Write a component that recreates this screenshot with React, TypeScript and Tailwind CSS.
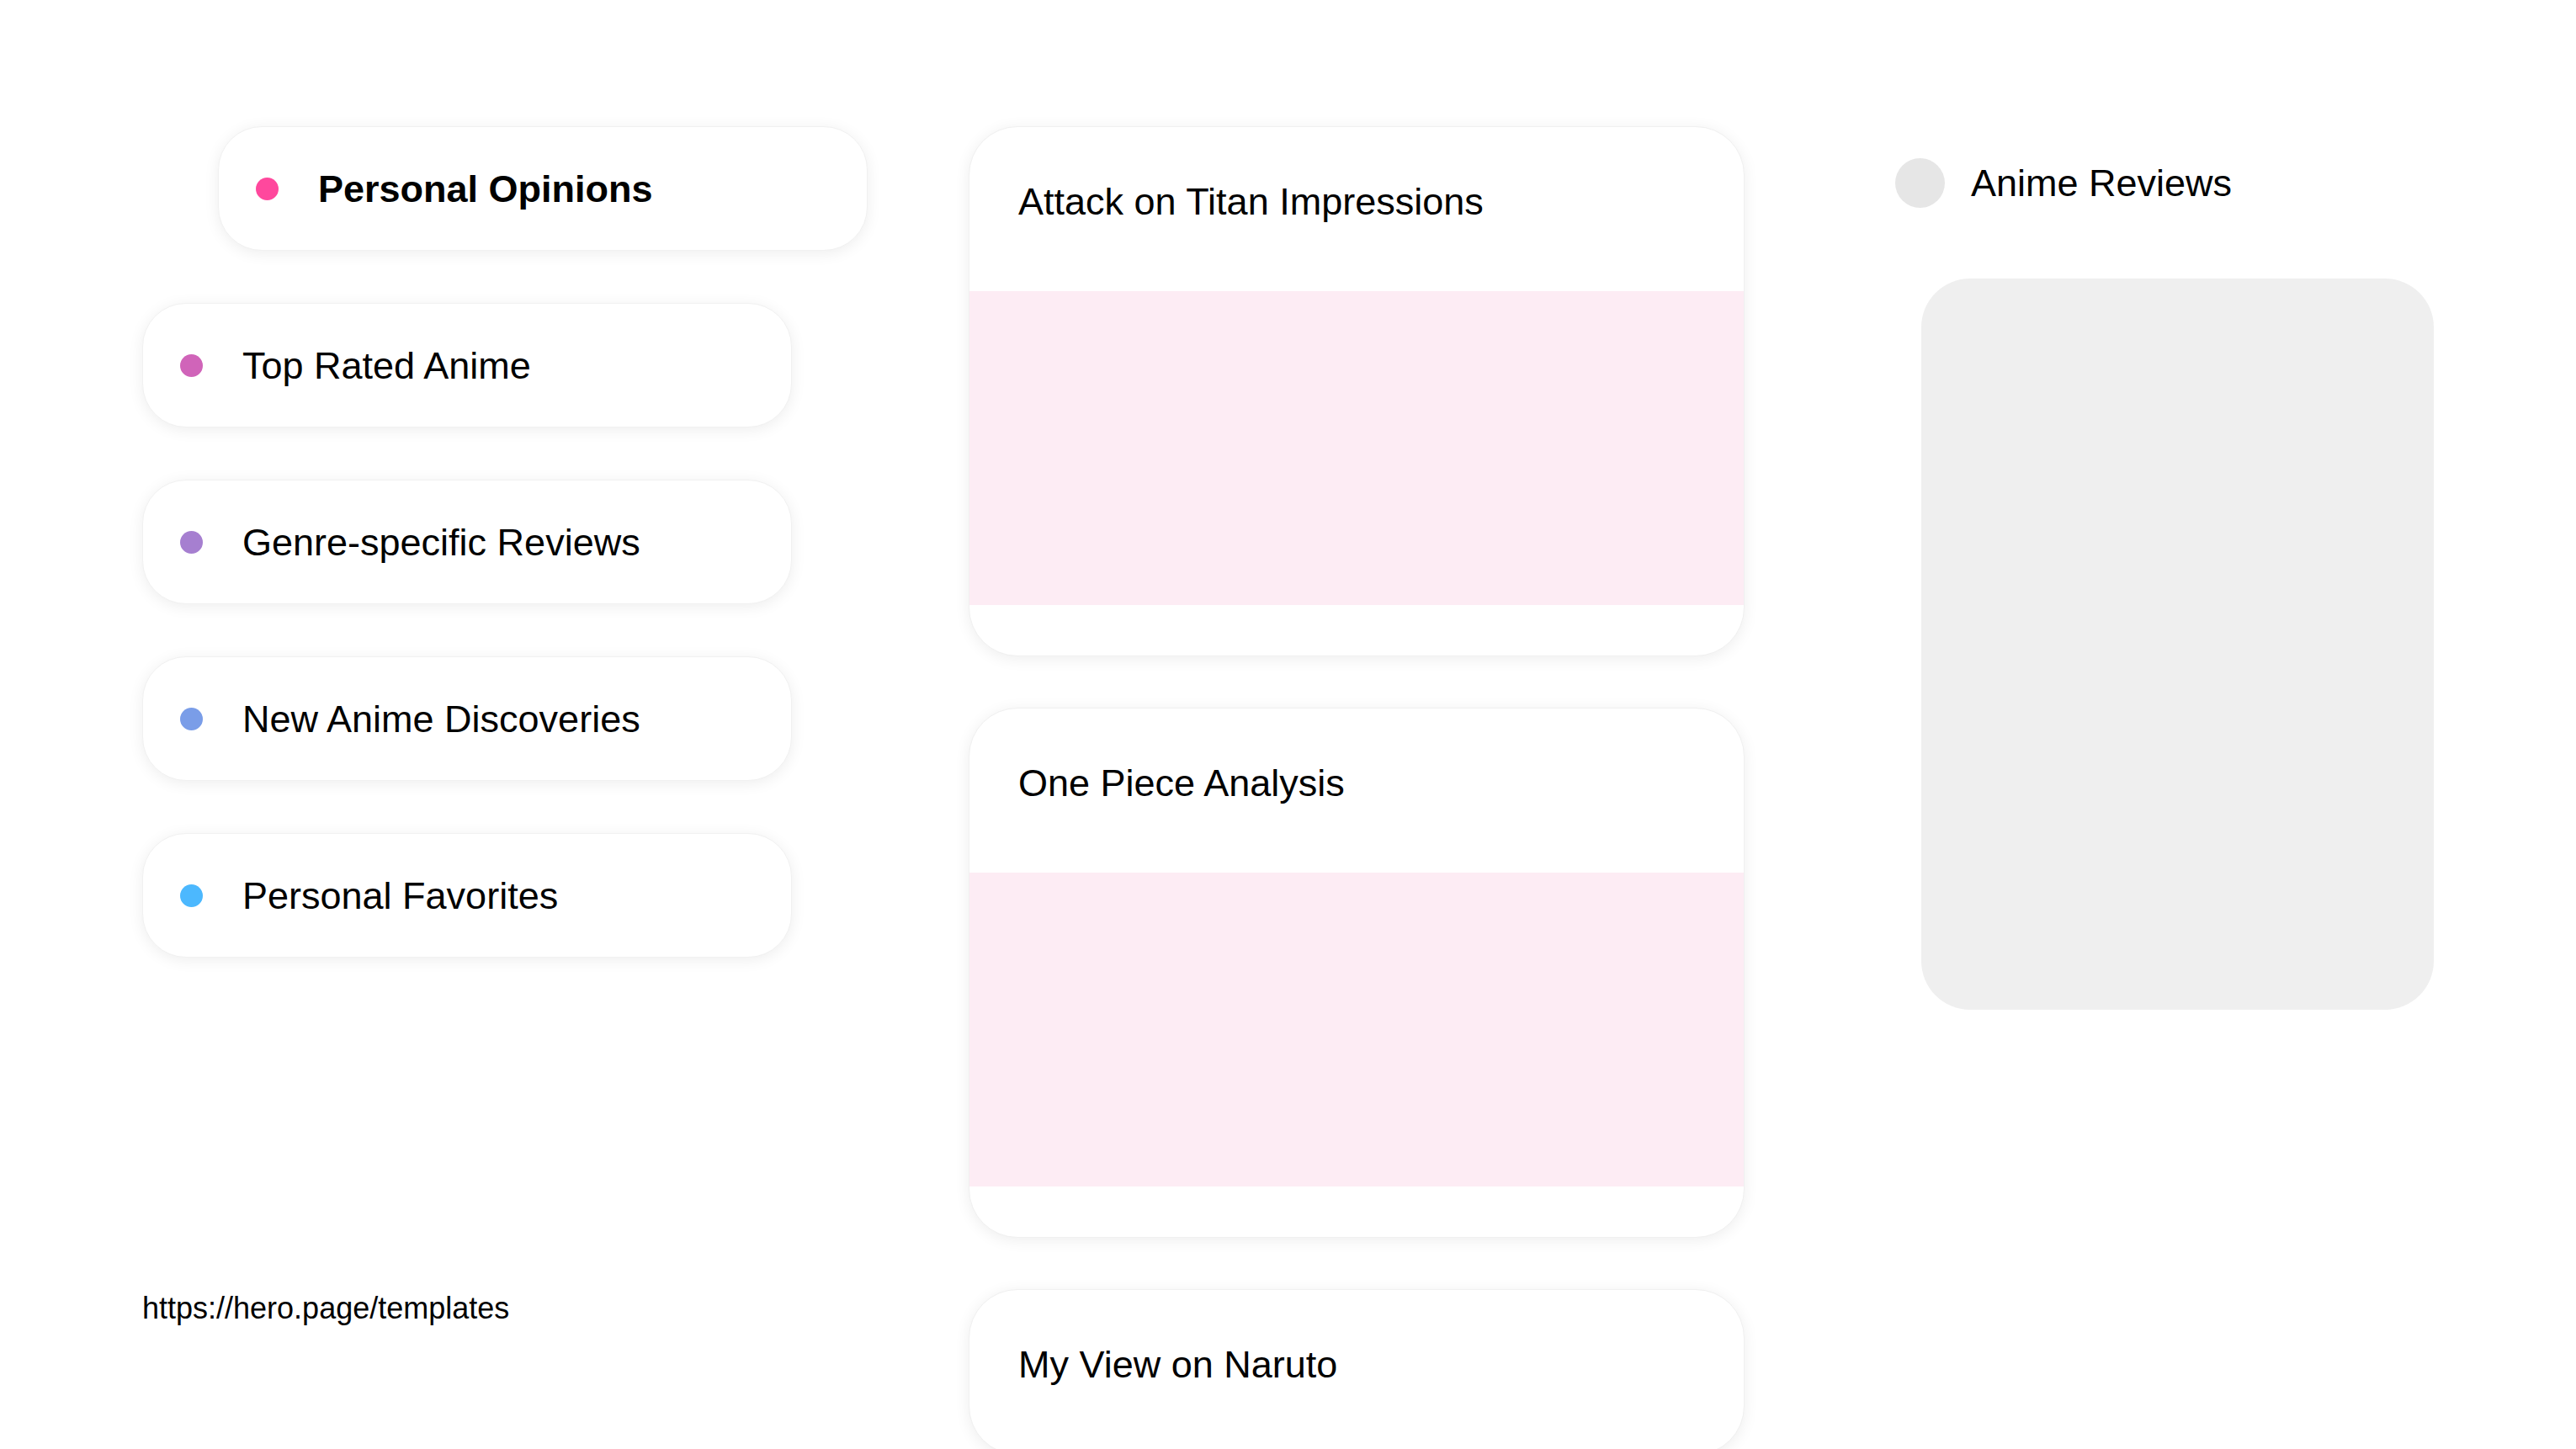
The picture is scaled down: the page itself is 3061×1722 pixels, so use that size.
import React from "react";

const pills = [
  { label: "Top Rated Anime", color: "bg-[#d064b9]" },
  { label: "Genre-specific Reviews", color: "bg-[#a67fd0]" },
  { label: "New Anime Discoveries", color: "bg-[#7a9de8]" },
  { label: "Personal Favorites", color: "bg-[#4cb8fe]" },
];

function Pill({ label, color, bold, extra }: { label: string; color: string; bold?: boolean; extra?: string }) {
  return (
    <div
      className={`flex h-[148px] w-[772px] items-center rounded-[52px] border border-[#f1f1f1] bg-white pl-[44px] shadow-[0_3px_18px_rgba(0,0,0,0.07)] ${extra ?? ""}`}
    >
      <span className={`h-[27px] w-[27px] shrink-0 rounded-full ${color}`} />
      <span className={`ml-[47px] text-[45px] leading-none text-black ${bold ? "font-bold" : ""}`}>{label}</span>
    </div>
  );
}

function Card({ title, pink = true }: { title: string; pink?: boolean }) {
  return (
    <div className="w-[922px] shrink-0 overflow-hidden rounded-[58px] border border-[#f0f0f0] bg-white shadow-[0_3px_18px_rgba(0,0,0,0.07)]">
      <div className="h-[195px] px-[58px] pt-[56px]">
        <div className="text-[45px] leading-[66px] text-black">{title}</div>
      </div>
      {pink && (
        <>
          <div className="h-[373px] bg-[#fdecf4]" />
          <div className="h-[60px]" />
        </>
      )}
    </div>
  );
}

export default function App() {
  return (
    <div
      className="h-[1722px] w-full overflow-hidden bg-white"
      style={{ fontFamily: '"Liberation Sans", Arial, sans-serif' }}
    >
      <div className="flex pl-[169px] pt-[150px]">
        {/* Left column */}
        <div className="flex w-[860px] shrink-0 flex-col">
          <Pill label="Personal Opinions" color="bg-[#ff489d]" bold extra="ml-[90px]" />
          <div className="mt-[62px] flex flex-col gap-[62px]">
            {pills.map((p) => (
              <Pill key={p.label} label={p.label} color={p.color} />
            ))}
          </div>
          <div className="mt-[396px] text-[36px] leading-[41px] text-black">https://hero.page/templates</div>
        </div>

        {/* Middle column */}
        <div className="ml-[122px] flex flex-col gap-[61px]">
          <Card title="Attack on Titan Impressions" />
          <Card title="One Piece Analysis" />
          <div className="h-[400px]">
            <Card title="My View on Naruto" pink={false} />
          </div>
        </div>

        {/* Right column */}
        <div className="ml-[179px] flex flex-col pt-[38px]">
          <div className="flex items-center">
            <span className="h-[59px] w-[59px] rounded-full bg-[#e6e6e6]" />
            <span className="ml-[31px] text-[45px] leading-none text-black">Anime Reviews</span>
          </div>
          <div className="ml-[31px] mt-[84px] h-[869px] w-[609px] rounded-[58px] bg-[#efefef]" />
        </div>
      </div>
    </div>
  );
}
